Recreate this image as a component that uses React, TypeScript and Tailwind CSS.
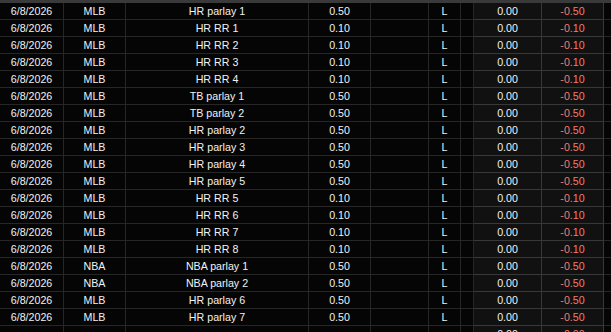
import React from "react";

type Row = { d: string; lg: string; desc: string; amt: string; res: string; win: string; net: string };

const raw: [string, string, string][] = [
  ["MLB", "HR parlay 1", "0.50"],
  ["MLB", "HR RR 1", "0.10"],
  ["MLB", "HR RR 2", "0.10"],
  ["MLB", "HR RR 3", "0.10"],
  ["MLB", "HR RR 4", "0.10"],
  ["MLB", "TB parlay 1", "0.50"],
  ["MLB", "TB parlay 2", "0.50"],
  ["MLB", "HR parlay 2", "0.50"],
  ["MLB", "HR parlay 3", "0.50"],
  ["MLB", "HR parlay 4", "0.50"],
  ["MLB", "HR parlay 5", "0.50"],
  ["MLB", "HR RR 5", "0.10"],
  ["MLB", "HR RR 6", "0.10"],
  ["MLB", "HR RR 7", "0.10"],
  ["MLB", "HR RR 8", "0.10"],
  ["NBA", "NBA parlay 1", "0.50"],
  ["NBA", "NBA parlay 2", "0.50"],
  ["MLB", "HR parlay 6", "0.50"],
  ["MLB", "HR parlay 7", "0.50"],
];

const rows: Row[] = raw.map(([lg, desc, amt]) => ({
  d: "6/8/2026",
  lg,
  desc,
  amt,
  res: "L",
  win: "0.00",
  net: "-" + amt,
}));

const cellDark = "h-[17px] flex items-center justify-center border-r border-b border-[#262626] bg-[#050505] overflow-hidden whitespace-nowrap";
const cellGray = "h-[17px] flex items-center justify-center border-r border-b border-[#383838] bg-[#111111] overflow-hidden whitespace-nowrap";

function TableRow({ r }: { r: Row }) {
  return (
    <div className="grid grid-cols-[64px_62px_183px_62px_58px_32px_13px_68px_62px_1fr]">
      <div className={cellDark}>{r.d}</div>
      <div className={cellDark}>{r.lg}</div>
      <div className={cellDark}>{r.desc}</div>
      <div className={cellDark}>{r.amt}</div>
      <div className={cellDark}></div>
      <div className={cellDark}>{r.res}</div>
      <div className={cellDark}></div>
      <div className={cellGray}>{r.win}</div>
      <div className={cellGray + " text-[#f47c6c]"}>{r.net}</div>
      <div className="h-[17px] border-b border-[#262626] bg-[#050505]"></div>
    </div>
  );
}

export default function App() {
  return (
    <div
      className="w-[611px] h-[332px] overflow-hidden bg-[#050505] text-[#f2f2f2] text-[10.67px] leading-none"
      style={{ fontFamily: '"Liberation Sans", Arial, sans-serif' }}
    >
      <div className="h-[3px] bg-[#3a3a3a]" />
      {rows.map((r, i) => (
        <TableRow key={i} r={r} />
      ))}
      <TableRow r={{ d: "", lg: "", desc: "", amt: "", res: "", win: "0.00", net: "-0.00" }} />
    </div>
  );
}
